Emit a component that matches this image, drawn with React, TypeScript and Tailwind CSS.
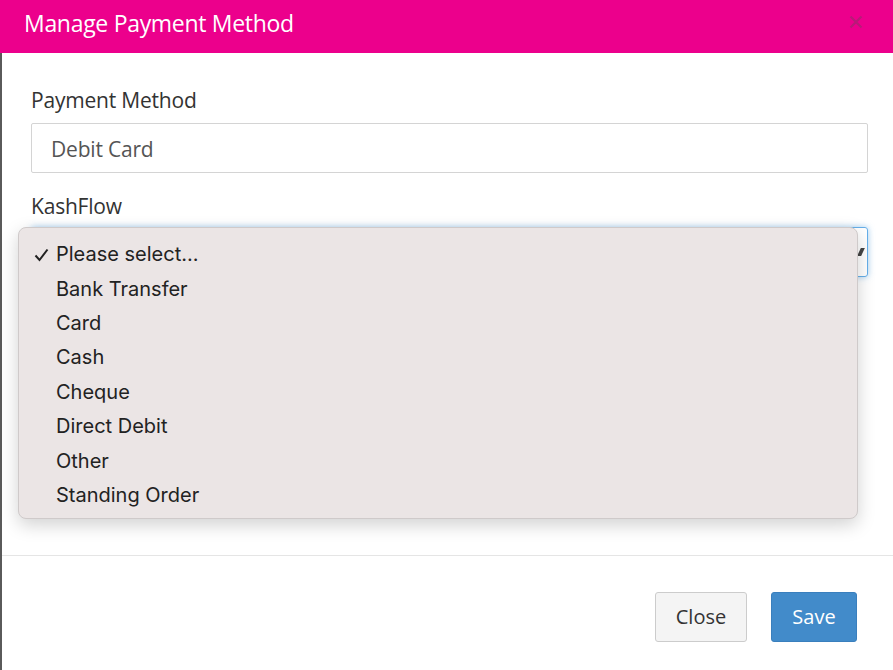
import React from "react";

const items = [
  "Please select...",
  "Bank Transfer",
  "Card",
  "Cash",
  "Cheque",
  "Direct Debit",
  "Other",
  "Standing Order",
];

export default function App() {
  return (
    <div
      className="w-[893px] h-[670px] bg-white overflow-hidden relative"
      style={{ fontFamily: '"Open Sans", sans-serif' }}
    >
      <div className="h-[53px] bg-[#ec008c] flex items-start justify-between pl-[24px] pr-[30px] pt-[9px]">
        <span className="text-white text-[23px] leading-[28px] tracking-[-0.3px]">Manage Payment Method</span>
        <svg width="14" height="14" viewBox="0 0 14 14" className="mt-[6px]">
          <path d="M1.5 1.5 L12.5 12.5 M12.5 1.5 L1.5 12.5" stroke="#b81a78" strokeWidth="2.2" />
        </svg>
      </div>
      <div className="border-l-2 border-[#5a5a5a]">
        <div className="pl-[29px] pr-[25px] pt-[34px] pb-[278px]">
          <div className="text-[21px] leading-[26px] text-[#333] tracking-[-0.2px]">Payment Method</div>
          <div className="mt-[10px] h-[50px] border border-[#d4d4d4] rounded-[2px] flex items-center pl-[19px] pt-[4px] text-[21px] text-[#555] tracking-[-0.2px]">
            Debit Card
          </div>
          <div className="mt-[20px] text-[21px] leading-[26px] text-[#333] tracking-[-0.2px]">KashFlow</div>
          <div className="mt-[8px] relative h-[50px] border border-[#66afe9] rounded-[3px] shadow-[0_0_6px_rgba(102,175,233,0.6)]">
            <div className="absolute right-[4px] top-[20px] w-[4px] h-[8px] bg-[#444] skew-x-[-25deg]" />
            <div
              className="absolute left-[-14px] top-[-1px] w-[840px] h-[292px] bg-[#ebe5e5] rounded-[8px] border border-[#cfcaca] shadow-[0_6px_18px_rgba(0,0,0,0.18)] pt-[9px]"
              style={{ fontFamily: 'Inter, "Noto Sans", sans-serif' }}
            >
              {items.map((it, i) => (
                <div key={it} className="h-[34.4px] flex items-center text-[20px] text-[#222] relative pl-[37px]">
                  {i === 0 && (
                    <svg width="15" height="14" viewBox="0 0 15 14" className="absolute left-[15px] top-[11px]">
                      <path d="M1.5 7.5 L5.5 12 L13.5 1.5" stroke="#222" strokeWidth="2" fill="none" />
                    </svg>
                  )}
                  {it}
                </div>
              ))}
            </div>
          </div>
        </div>
        <div className="h-px bg-[#e5e5e5]" />
        <div className="flex justify-end gap-[24px] pt-[36px] pr-[36px] h-[114px]">
          <button className="h-[50px] w-[92px] bg-[#f4f4f4] border border-[#cccccc] rounded-[3px] text-[20px] text-[#333]">
            Close
          </button>
          <button className="h-[50px] w-[86px] bg-[#428bca] border border-[#3a7fbd] rounded-[3px] text-[20px] text-white">
            Save
          </button>
        </div>
      </div>
    </div>
  );
}
